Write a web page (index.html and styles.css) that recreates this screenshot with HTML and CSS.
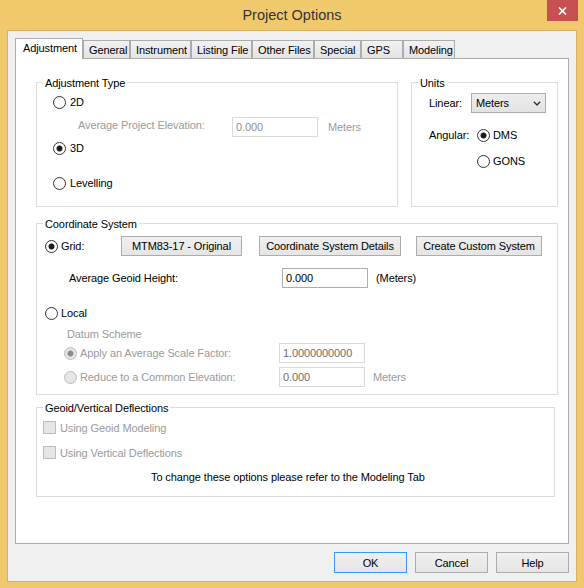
FILE: index.html
```html
<!DOCTYPE html>
<html>
<head>
<meta charset="utf-8">
<title>Project Options</title>
<link rel="stylesheet" href="styles.css">
</head>
<body>
<div class="window">
  <div class="titlebar">
    <div class="title">Project Options</div>
    <div class="close"><svg width="9" height="8" viewBox="0 0 9 8"><path d="M1 0.5 L8 7.5 M8 0.5 L1 7.5" stroke="#fff" stroke-width="1.7" fill="none"/></svg></div>
  </div>
  <div class="client">
    <div class="tabs">
      <div class="tab active t-adj">Adjustment</div>
      <div class="tab t-gen">General</div>
      <div class="tab t-ins">Instrument</div>
      <div class="tab t-lst">Listing File</div>
      <div class="tab t-oth">Other Files</div>
      <div class="tab t-spc">Special</div>
      <div class="tab t-gps">GPS</div>
      <div class="tab t-mod">Modeling</div>
    </div>
    <div class="panel">
      <div class="row-top">
        <div class="group g-adj">
          <div class="gtitle">Adjustment Type</div>
          <div class="row adj-2d"><div class="opt"><span class="radio"></span><span>2D</span></div></div>
          <div class="row adj-elev">
            <span class="lbl dis raise w-elev">Average Project Elevation:</span>
            <span class="input dis">0.000</span>
            <span class="unit dis u-10">Meters</span>
          </div>
          <div class="row adj-3d"><div class="opt"><span class="radio on"></span><span>3D</span></div></div>
          <div class="row adj-lev"><div class="opt"><span class="radio"></span><span>Levelling</span></div></div>
        </div>
        <div class="group g-units">
          <div class="gtitle">Units</div>
          <div class="row u-lin">
            <span class="lbl w-42">Linear:</span>
            <div class="select"><span>Meters</span><svg width="8" height="5" viewBox="0 0 8 5"><polyline points="0.8,0.8 4,4 7.2,0.8" stroke="#333" stroke-width="1.4" fill="none"/></svg></div>
          </div>
          <div class="row u-ang">
            <span class="lbl w-42">Angular:</span>
            <div class="opt tight m-6"><span class="radio on"></span><span>DMS</span></div>
          </div>
          <div class="row u-gons"><div class="opt tight"><span class="radio"></span><span>GONS</span></div></div>
        </div>
      </div>
      <div class="group g-coord">
        <div class="gtitle">Coordinate System</div>
        <div class="row c-grid">
          <div class="opt tight w-grid"><span class="radio on"></span><span>Grid:</span></div>
          <div class="btn b-mtm">MTM83-17 - Original</div>
          <div class="btn b-csd">Coordinate System Details</div>
          <div class="btn b-ccs">Create Custom System</div>
        </div>
        <div class="row c-geoid">
          <span class="lbl w-geoid">Average Geoid Height:</span>
          <span class="input">0.000</span>
          <span class="unit u-8">(Meters)</span>
        </div>
        <div class="row c-local"><div class="opt tight"><span class="radio"></span><span>Local</span></div></div>
        <div class="c-datum dis">Datum Scheme</div>
        <div class="row c-apply">
          <div class="opt tight w-scale dis"><span class="radio dis on"></span><span>Apply an Average Scale Factor:</span></div>
          <span class="input dis dark">1.0000000000</span>
        </div>
        <div class="row c-reduce">
          <div class="opt tight w-scale dis"><span class="radio dis"></span><span>Reduce to a Common Elevation:</span></div>
          <span class="input dis dark">0.000</span>
          <span class="unit dis u-8">Meters</span>
        </div>
      </div>
      <div class="group g-geoid">
        <div class="gtitle">Geoid/Vertical Deflections</div>
        <div class="row g-cb1"><span class="cb"></span><span class="dis">Using Geoid Modeling</span></div>
        <div class="row g-cb2"><span class="cb"></span><span class="dis">Using Vertical Deflections</span></div>
        <div class="g-note">To change these options please refer to the Modeling Tab</div>
      </div>
    </div>
    <div class="footer">
      <div class="btn fbtn ok">OK</div>
      <div class="btn fbtn">Cancel</div>
      <div class="btn fbtn">Help</div>
    </div>
  </div>
</div>
</body>
</html>
```
FILE: styles.css
```css
* { box-sizing: border-box; }
html, body { margin: 0; padding: 0; }
body {
  width: 584px; height: 588px; overflow: hidden;
  font-family: "Liberation Sans", Arial, sans-serif;
  font-size: 11px; letter-spacing: -0.1px; color: #000;
}
.window { width: 584px; height: 588px; background: #F0C96C; }
.titlebar { height: 30px; display: grid; grid-template-columns: 1fr auto 1fr; align-items: start; }
.title { grid-column: 2; font-size: 14.5px; letter-spacing: 0; color: #333; line-height: 31px; }
.close {
  grid-column: 3; justify-self: end; width: 31px; height: 21px; margin-right: 6px;
  background: #C75050; display: flex; align-items: center; justify-content: center; padding-top: 1px;
}
.client {
  margin: 0 7px; height: 552px; border: 1px solid #D8B262;
  background: #F0F0F0; padding: 7px 7px 0 7px;
}
.tabs { display: flex; height: 20px; align-items: flex-end; }
.tab {
  height: 18px; border: 1px solid #ACACAC; border-bottom: 0;
  background: linear-gradient(#F2F2F2, #E4E4E4);
  padding: 2px 0 0 5px; line-height: 14px; white-space: nowrap;
}
.tab.active { height: 21px; background: #fff; padding: 2px 0 0 7px; margin-bottom: -1px; position: relative; z-index: 1; }
.t-adj { width: 68px; }
.t-gen { width: 47px; }
.t-ins { width: 61px; }
.t-lst { width: 61px; }
.t-oth { width: 62px; }
.t-spc { width: 47px; }
.t-gps { width: 42px; }
.t-mod { width: 52px; }

.panel { height: 486px; border: 1px solid #ACACAC; background: #fff; padding: 23px 10px 0 20px; }
.row-top { display: flex; gap: 13px; }
.group { border: 1px solid #DCDCDC; }
.g-adj { width: 362px; height: 125px; }
.g-units { width: 147px; height: 125px; }
.g-coord { width: 522px; height: 172px; margin-top: 16px; }
.g-geoid { width: 519px; height: 90px; margin-top: 12px; }
.gtitle { width: fit-content; margin: -7px 0 -7px 6px; padding: 0 2px; background: #fff; line-height: 14px; }

.row { display: flex; align-items: center; height: 20px; }
.opt { display: flex; align-items: center; gap: 4px; white-space: nowrap; }
.opt.tight { gap: 3px; }
.radio { width: 13px; height: 13px; flex: none; border-radius: 50%; border: 1px solid #333; background: #fff; }
.radio.on { background: radial-gradient(circle, #1c1c1c 0, #1c1c1c 2.6px, #fff 3.4px); }
.radio.dis { border-color: #BCBCBC; background: #E6E6E6; }
.radio.dis.on { background: radial-gradient(circle, #8c8c8c 0, #8c8c8c 2.6px, #E6E6E6 3.4px); }
.cb { width: 13px; height: 13px; flex: none; border: 1px solid #BCBCBC; background: #E6E6E6; margin-right: 4px; }
.dis { color: #9A9A9A; }
.lbl { flex: none; white-space: nowrap; }
.raise { margin-bottom: 4px; }
.input {
  flex: none; width: 86px; height: 20px; border: 1px solid #ABADB3; background: #fff;
  padding: 0 0 0 3px; line-height: 18px; color: #000;
}
.input.dis { border-color: #D9D9D9; color: #8F8F8F; }
.input.dark { color: #6D6D6D; }
.unit { white-space: nowrap; }
.u-10 { margin-left: 10px; }
.u-8 { margin-left: 8px; }
.w-elev { width: 154px; }
.w-42 { width: 42px; }
.w-grid { width: 76px; flex: none; }
.w-geoid { width: 213px; }
.w-scale { width: 215px; flex: none; }
.m-6 { margin-left: 6px; }

.adj-2d { margin: 9px 0 0 16px; }
.adj-elev { margin: 5px 0 0 41px; }
.adj-3d { margin: 1px 0 0 16px; }
.adj-lev { margin: 15px 0 0 16px; }

.u-lin { margin: 10px 0 0 17px; }
.u-ang { margin: 12px 0 0 17px; }
.u-gons { margin: 6px 0 0 65px; }
.select {
  width: 75px; height: 20px; border: 1px solid #ACACAC; background: linear-gradient(#EDEDED, #E3E3E3);
  display: flex; align-items: center; justify-content: space-between; padding: 0 4px 0 4px;
}

.btn {
  flex: none; height: 20px; border: 1px solid #ACACAC; background: linear-gradient(#F0F0F0, #E5E5E5);
  display: flex; align-items: center; justify-content: center; white-space: nowrap;
}
.b-mtm { width: 121px; }
.b-csd { width: 142px; margin-left: 17px; }
.b-ccs { width: 126px; margin-left: 15px; }

.c-grid { margin: 12px 0 0 8px; }
.c-geoid { margin: 12px 0 0 32px; }
.c-local { margin: 15px 0 0 8px; }
.c-datum { margin: 4px 0 0 30px; line-height: 14px; }
.c-apply { margin: 2px 0 0 27px; }
.c-reduce { margin: 4px 0 0 27px; }

.g-cb1 { margin: 13px 0 0 6px; height: 13px; }
.g-cb2 { margin: 12px 0 0 6px; height: 13px; }
.g-note { margin: 11px 0 0 114px; line-height: 14px; white-space: nowrap; }

.footer { display: flex; justify-content: flex-end; gap: 8px; margin-top: 8px; }
.fbtn { width: 73px; height: 21px; }
.ok { border-color: #3399FF; }
```
